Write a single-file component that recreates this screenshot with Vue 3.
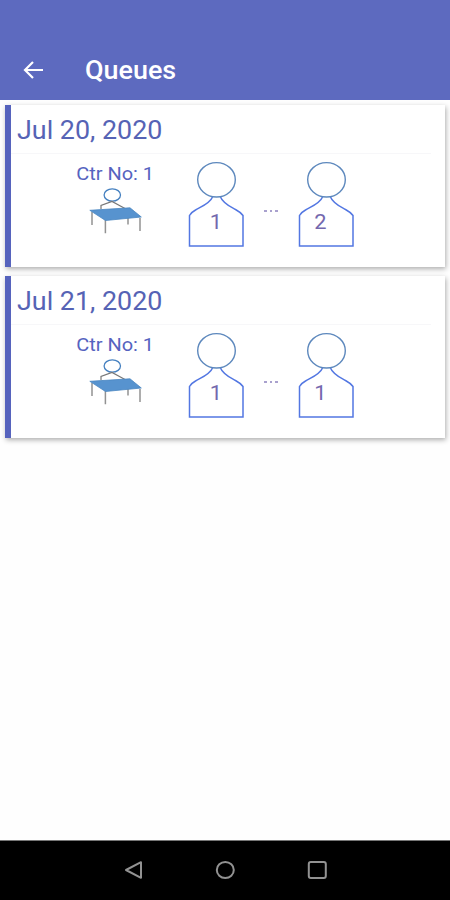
<script setup>
const queues = [
  { date: 'Jul 20, 2020', counter: 1, first: 1, last: 2 },
  { date: 'Jul 21, 2020', counter: 1, first: 1, last: 1 },
];
</script>

<template>
  <div class="screen">
    <header class="header">
      <svg class="header__back" viewBox="0 0 20 18">
        <path d="M20 9H2M10 1L2 9l8 8" />
      </svg>
      <h1 class="header__title">Queues</h1>
    </header>

    <main class="list">
      <section v-for="queue in queues" :key="queue.date" class="card">
        <h2 class="card__date"><span>{{ queue.date }}</span></h2>

        <div class="card__body">
          <div class="counter">
            <p class="counter__label">Ctr No: {{ queue.counter }}</p>
            <svg class="counter__desk" viewBox="0 0 56 48">
              <ellipse class="desk-head" cx="25.3" cy="8" rx="8.2" ry="6.2" />
              <path class="desk-line" d="M14 22v-3.5L25 14.5 38 21.5" />
              <path class="desk-leg" d="M5 25v13M18.4 32v14.3M41 27v10.5M53 31v13" />
              <path class="desk-top" d="M2.8 23.3L43 20.8 54.3 30 18.5 33.5z" />
            </svg>
          </div>

          <div class="person">
            <svg class="person__figure" viewBox="0 0 57 87">
              <path class="person__body" d="M24.5 36C22 42.5 12.5 46 7.5 49Q3 51.5 1.5 54.5V85H55V54.5Q53 51.5 47.5 48.5C42 45.5 35 42.5 32.5 36" />
              <ellipse class="person__head" cx="28.5" cy="18.8" rx="18.8" ry="17.2" />
            </svg>
            <span class="person__number">{{ queue.first }}</span>
          </div>

          <div class="dots"><i></i><i></i><i></i></div>

          <div class="person">
            <svg class="person__figure" viewBox="0 0 57 87">
              <path class="person__body" d="M24.5 36C22 42.5 12.5 46 7.5 49Q3 51.5 1.5 54.5V85H55V54.5Q53 51.5 47.5 48.5C42 45.5 35 42.5 32.5 36" />
              <ellipse class="person__head" cx="28.5" cy="18.8" rx="18.8" ry="17.2" />
            </svg>
            <span class="person__number person__number--last">{{ queue.last }}</span>
          </div>
        </div>
      </section>
    </main>

    <nav class="navbar">
      <svg class="navbar__icon" viewBox="0 0 20 20">
        <path d="M18 2.2v15.6L3 10z" />
      </svg>
      <svg class="navbar__icon" viewBox="0 0 20 20">
        <ellipse cx="10.3" cy="10" rx="8.5" ry="8" />
      </svg>
      <svg class="navbar__icon" viewBox="0 0 20 20">
        <rect x="1.8" y="2" width="17" height="16" rx="2" />
      </svg>
    </nav>
  </div>
</template>

<style>
body {
  background: #fff;
}
</style>

<style scoped>
.screen {
  display: flex;
  flex-direction: column;
  width: 450px;
  height: 900px;
  overflow: hidden;
  background: #fefefe;
  font-family: Roboto, sans-serif;
}

.header {
  display: flex;
  align-items: center;
  gap: 42px;
  box-sizing: border-box;
  height: 100px;
  padding: 40px 0 0 23px;
  background: #5d6abf;
}

.header__back {
  width: 20px;
  height: 18px;
  fill: none;
  stroke: #fff;
  stroke-width: 2.2;
}

.header__title {
  margin: 0;
  color: #fff;
  font-size: 26px;
  font-weight: 500;
  line-height: 30px;
  transform: scaleX(1.035);
  transform-origin: left;
}

.list {
  flex: 1;
  display: flex;
  flex-direction: column;
  gap: 9px;
  padding: 5px 5px 0;
}

.card {
  box-sizing: border-box;
  height: 162px;
  border-left: 6px solid #5663bd;
  background: #fff;
  box-shadow: 1px 2px 5px rgba(0, 0, 0, 0.32);
}

.card__date {
  box-sizing: border-box;
  height: 49px;
  margin: 0 14px 0 0;
  padding-left: 6px;
  border-bottom: 1px solid #f7f7f9;

  color: #5663b5;
  font-size: 26px;
  font-weight: 400;
  line-height: 50px;
}

.card__date span {
  display: inline-block;
  transform: scaleX(1.033);
  transform-origin: left;
}

.card__body {
  display: flex;
  align-items: flex-start;
  padding: 7px 0 0 54px;
}

.counter {
  display: flex;
  flex-direction: column;
  align-items: center;
  width: 100px;
  margin-right: 23px;
}

.counter__label {
  margin: 0;
  color: #5663c0;
  font-size: 18px;
  line-height: 25px;
  white-space: nowrap;
  transform: scaleX(1.11);
}

.counter__desk {
  width: 56px;
  height: 48px;
  margin-top: 1px;
}

.desk-head {
  fill: none;
  stroke: #4580c0;
  stroke-width: 1.3;
}

.desk-line {
  fill: none;
  stroke: #777;
  stroke-width: 1.2;
}

.desk-leg {
  stroke: #929292;
  stroke-width: 1.5;
}

.desk-top {
  fill: #5793cf;
  stroke: #4a86c2;
  stroke-width: 0.8;
}

.person {
  display: grid;
  width: 57px;
  height: 87px;
}

.person__figure,
.person__number {
  grid-area: 1 / 1;
}

.person__figure {
  width: 57px;
  height: 87px;
  fill: none;
}

.person__body {
  stroke: #5377e2;
  stroke-width: 1.5;
}

.person__head {
  stroke: #5d88bd;
  stroke-width: 1.4;
}

.person__number {
  padding: 50px 1px 0 0;
  color: #7468ae;
  font-size: 19.5px;
  line-height: 24px;
  text-align: center;
  transform: scaleX(1.12);
}

.person__number--last {
  padding-right: 11px;
}

.dots {
  display: flex;
  gap: 3px;
  width: 14px;
  margin: 49px 20px 0 19px;
}

.dots i {
  width: 2.5px;
  height: 2px;
  background: #a9a1ce;
}

.navbar {
  display: flex;
  justify-content: center;
  align-items: center;
  gap: 72px;
  box-sizing: border-box;
  height: 60px;
  padding-bottom: 1px;
  border-top: 1px solid #777;
  background: #000;
}

.navbar__icon {
  width: 20px;
  height: 20px;
  fill: none;
  stroke: #929292;
  stroke-width: 2;
  stroke-linejoin: round;
}
</style>
